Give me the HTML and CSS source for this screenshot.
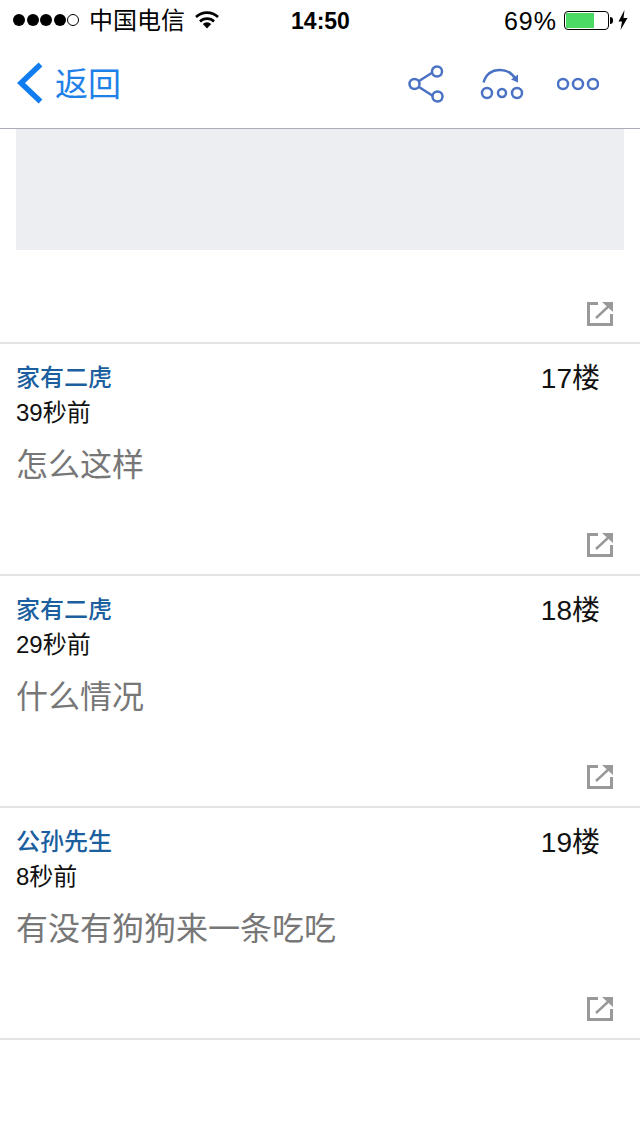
FILE: index.html
```html
<!DOCTYPE html>
<html lang="zh-CN">
<head>
    <meta charset="UTF-8">
    <meta name="viewport" content="width=device-width, initial-scale=1.0">
    <title>返回</title>
    <link rel="stylesheet" href="styles.css">
</head>
<body>
    <div id="app">
        <div class="status-bar">
            <div class="status-left">
                <span class="signal">
                    <i class="dot"></i><i class="dot"></i><i class="dot"></i><i class="dot"></i><i class="dot empty"></i>
                </span>
                <span class="carrier">中国电信</span>
                <svg class="wifi" width="24" height="19" viewBox="0 0 24 19">
                    <path d="M1 7a16 16 0 0 1 22 0" fill="none" stroke="#000" stroke-width="2.600"/>
                    <path d="M5 11.500a10 10 0 0 1 14 0" fill="none" stroke="#000" stroke-width="2.600"/>
                    <path d="M7.800 14a6 6 0 0 1 8.400 0L12 18.500z" fill="#000"/>
                </svg>
            </div>
            <div class="clock">14:50</div>
            <div class="status-right">
                <span class="percent">69%</span>
                <span class="battery"><span class="battery-fill"></span></span>
                <span class="battery-tip"></span>
                <svg class="bolt" width="10" height="20" viewBox="0 0 10 20">
                    <path d="M6.500 0 0.500 11.500H4L2.500 20 9.500 8H5.500z" fill="#000"/>
                </svg>
            </div>
        </div>

        <div class="nav-bar">
            <div class="back">
                <svg width="28" height="42" viewBox="0 0 28 42">
                    <path d="M24.500 2.500 5 21l19.500 18.500" fill="none" stroke="#0f7cf0" stroke-width="5.500"/>
                </svg>
                <span>返回</span>
            </div>
            <div class="nav-icons">
                <svg class="nav-icon share" width="38" height="38" viewBox="0 0 38 38">
                    <g fill="none" stroke="#4a72c4" stroke-width="2.500">
                        <path d="M11 16 24.500 7.500M11 22l14 9"/>
                        <circle cx="6.500" cy="19" r="5"/>
                        <circle cx="29" cy="6.500" r="5"/>
                        <circle cx="29.500" cy="31.500" r="5"/>
                    </g>
                </svg>
                <svg class="nav-icon" width="44" height="34" viewBox="0 0 44 34">
                    <g fill="none" stroke="#4a72c4" stroke-width="2.500">
                        <path d="M3.500 15.500C6 7 12.500 3 20 3c6.500 0 12 3 15.500 9"/>
                        <circle cx="7" cy="26" r="5"/>
                        <circle cx="22" cy="26" r="4"/>
                        <circle cx="37" cy="26" r="5"/>
                    </g>
                    <path d="M38 7.500V15.500L31 12.500z" fill="#4a72c4"/>
                </svg>
                <svg class="nav-icon" width="42" height="14" viewBox="0 0 42 14">
                    <g fill="none" stroke="#4a72c4" stroke-width="2.500">
                        <circle cx="6" cy="7" r="5"/>
                        <circle cx="21" cy="7" r="5"/>
                        <circle cx="36" cy="7" r="5"/>
                    </g>
                </svg>
            </div>
        </div>

        <div class="first-post">
            <div class="placeholder"></div>
            <div class="post-foot">
                <svg class="open-icon" width="26" height="24" viewBox="0 0 26 24">
                    <path d="M11 1.500H1.500v21h23V12" fill="none" stroke="#999" stroke-width="3"/>
                    <path d="M9 16 23 3" fill="none" stroke="#999" stroke-width="2.500"/>
                    <path d="M15 0h11v10z" fill="#999"/>
                </svg>
            </div>
        </div>

        <div class="post">
            <div class="post-head">
                <div>
                    <div class="author">家有二虎</div>
                    <div class="time">39秒前</div>
                </div>
                <div class="floor">17楼</div>
            </div>
            <div class="content">怎么这样</div>
            <div class="post-foot">
                <svg class="open-icon" width="26" height="24" viewBox="0 0 26 24">
                    <path d="M11 1.500H1.500v21h23V12" fill="none" stroke="#999" stroke-width="3"/>
                    <path d="M9 16 23 3" fill="none" stroke="#999" stroke-width="2.500"/>
                    <path d="M15 0h11v10z" fill="#999"/>
                </svg>
            </div>
        </div>

        <div class="post">
            <div class="post-head">
                <div>
                    <div class="author">家有二虎</div>
                    <div class="time">29秒前</div>
                </div>
                <div class="floor">18楼</div>
            </div>
            <div class="content">什么情况</div>
            <div class="post-foot">
                <svg class="open-icon" width="26" height="24" viewBox="0 0 26 24">
                    <path d="M11 1.500H1.500v21h23V12" fill="none" stroke="#999" stroke-width="3"/>
                    <path d="M9 16 23 3" fill="none" stroke="#999" stroke-width="2.500"/>
                    <path d="M15 0h11v10z" fill="#999"/>
                </svg>
            </div>
        </div>

        <div class="post">
            <div class="post-head">
                <div>
                    <div class="author">公孙先生</div>
                    <div class="time">8秒前</div>
                </div>
                <div class="floor">19楼</div>
            </div>
            <div class="content">有没有狗狗来一条吃吃</div>
            <div class="post-foot">
                <svg class="open-icon" width="26" height="24" viewBox="0 0 26 24">
                    <path d="M11 1.500H1.500v21h23V12" fill="none" stroke="#999" stroke-width="3"/>
                    <path d="M9 16 23 3" fill="none" stroke="#999" stroke-width="2.500"/>
                    <path d="M15 0h11v10z" fill="#999"/>
                </svg>
            </div>
        </div>
    </div>
</body>
</html>
```

FILE: styles.css
```css
body {
    margin: 0;
    background: #fff;
    font-family: "Liberation Sans", "Noto Sans CJK SC", sans-serif;
}

#app {
    width: 640px;
    height: 1136px;
    overflow: hidden;
}

.status-bar {
    height: 40px;
    display: grid;
    grid-template-columns: 1fr auto 1fr;
    align-items: center;
    padding: 0 12px 0 13px;
    box-sizing: border-box;
    color: #000;
}

.status-left {
    display: flex;
    align-items: center;
}

.signal {
    display: flex;
    gap: 1.500px;
}

.dot {
    width: 12px;
    height: 12px;
    border-radius: 50%;
    background: #000;
    box-sizing: border-box;
}

.dot.empty {
    background: none;
    border: 1px solid #000;
}

.carrier {
    margin-left: 10px;
    font-size: 24px;
    line-height: 28px;
    margin-top: 2px;
}

.wifi {
    margin-left: 10px;
    margin-top: -1px;
}

.clock {
    font-size: 23px;
    font-weight: bold;
    margin-top: 2px;
}

.status-right {
    display: flex;
    align-items: center;
    justify-content: flex-end;
}

.percent {
    font-size: 25px;
    letter-spacing: 1px;
    margin-top: 2px;
}

.battery {
    margin-left: 7px;
    width: 45px;
    height: 19px;
    border: 1px solid #000;
    border-radius: 4px;
    padding: 1px;
    box-sizing: border-box;
}

.battery-fill {
    display: block;
    width: 28px;
    height: 100%;
    background: #4cd964;
}

.battery-tip {
    width: 3px;
    height: 7px;
    margin-left: 1px;
    background: #000;
    border-radius: 0 3px 3px 0;
}

.bolt {
    margin-left: 5px;
}

.nav-bar {
    height: 88px;
    display: flex;
    align-items: center;
    justify-content: space-between;
    border-bottom: 1px solid #a9adb8;
    padding: 0 41px 0 16px;
}

.back {
    display: flex;
    align-items: center;
    color: #1f80e8;
    font-size: 33px;
}

.back svg {
    margin-right: 11px;
    margin-top: -2px;
}

.back span {
    margin-top: -5px;
}

.nav-icons {
    display: flex;
    align-items: center;
    gap: 33px;
}

.share {
    margin-right: 1px;
    margin-top: -1px;
}

.first-post {
    height: 213px;
    border-bottom: 2px solid #e4e4e6;
}

.placeholder {
    height: 121px;
    margin: 0 16px;
    background: #edeef2;
}

.post-foot {
    display: flex;
    justify-content: flex-end;
    padding-right: 27px;
}

.first-post .post-foot {
    margin-top: 52px;
}

.post {
    height: 232px;
    border-bottom: 2px solid #e4e4e6;
    padding-top: 20px;
    box-sizing: border-box;
}

.post-head {
    display: flex;
    justify-content: space-between;
    padding: 0 40px 0 16px;
}

.author {
    font-size: 24px;
    font-weight: 500;
    line-height: 28px;
    color: #1c5f9f;
}

.time {
    font-size: 24px;
    line-height: 28px;
    margin-top: 7px;
    color: #111;
}

.floor {
    font-size: 28px;
    line-height: 28px;
    margin-top: 1px;
    color: #111;
}

.content {
    margin-top: 19px;
    padding-left: 16px;
    font-size: 32px;
    line-height: 38px;
    color: #777;
}

.open-icon {
    display: block;
}

.post .post-foot {
    margin-top: 49px;
}
```
